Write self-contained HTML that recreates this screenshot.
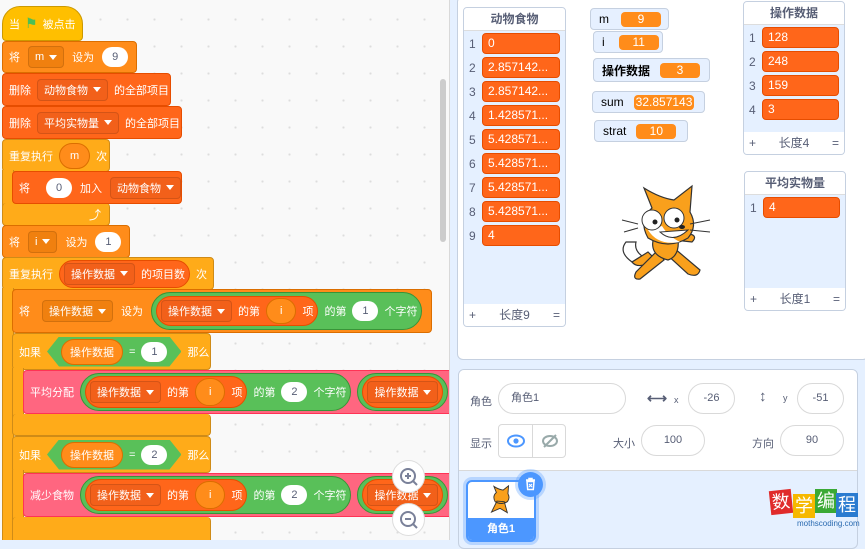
<!DOCTYPE html>
<html><head><meta charset="utf-8"><style>
*{box-sizing:border-box;margin:0;padding:0}
body{width:865px;height:540px;overflow:hidden;position:relative;background:#e5f0ff;font-family:"Liberation Sans","Noto Sans CJK SC",sans-serif;font-size:12px}
#code{position:absolute;left:0;top:0;width:450px;height:540px;background-color:#f9f9f9;background-image:radial-gradient(#ddd 1px,transparent 1.2px);background-size:27px 27px;background-position:6px 6px;border-right:1px solid #d9d9d9;overflow:hidden}
.b{position:absolute;color:#fff;display:flex;align-items:center;white-space:nowrap;padding-left:6px;border-radius:4px;font-size:11px;gap:6px}
.b>*{flex:none}
.ev{background:#ffbf00;border:1px solid #cc9900}
.va{background:#ff8c1a;border:1px solid #db6e00}
.li{background:#ff661a;border:1px solid #e64d00}
.co{background:#ffab19;border:1px solid #cf8b17}
.cu{background:#ff6680;border:1px solid #ff3355}
.dd{height:22px;border-radius:4px;padding:0 6px;display:flex;align-items:center;border:1px solid rgba(0,0,0,.12)}
.dd::after{content:"";border:4px solid transparent;border-top:5px solid #fff;border-bottom:0;margin-left:5px}
.ddl{background:#f2601a}.ddv{background:#f0800f}
.ov{height:20px;border-radius:10px;background:#fff;color:#575e75;padding:0 8px;display:flex;align-items:center;justify-content:center;min-width:26px}
.rp{border-radius:15px;display:flex;align-items:center;padding:0 4px;height:28px;gap:6px}
.rp>*{flex:none}
.gr{background:#59c059;border:1px solid #389438}
.orr{background:#ff661a;border:1px solid #e64d00;height:24px;border-radius:12px;padding:0 4px}
.vr{background:#ff8c1a;border:1px solid #db6e00;border-radius:12px;height:22px;padding:0 8px;display:flex;align-items:center}
.mon{position:absolute;background:#e6f0ff;border:1px solid #c5d0e0;border-radius:4px;display:flex;align-items:center;padding-left:8px;font-size:12px;color:#000}
.mv{background:#ff8c1a;color:#fff;border-radius:4px;height:15px;padding:0 6px;margin-left:10px;text-align:center;line-height:15px}
.list{position:absolute;background:#e5f0ff;border:1px solid #c5d0e0;border-radius:4px;overflow:hidden}
.lh{background:#fff;height:23px;text-align:center;line-height:23px;color:#575e75;font-weight:bold;border-bottom:1px solid #ddd}
.lf{position:absolute;bottom:0;left:0;right:0;height:22px;background:#fff;color:#575e75;font-size:12px;line-height:22px;text-align:center}
.lf .p{position:absolute;left:5px}.lf .e{position:absolute;right:5px}
.it{position:absolute;left:0;height:24px;width:100%}
.it .n{position:absolute;left:5px;top:4px;color:#575e75}
.it .v{position:absolute;left:18px;top:0;right:5px;height:21px;background:#ff661a;border:1px solid #e64d00;border-radius:4px;color:#fff;padding-left:5px;line-height:19px}
.inp{position:absolute;height:31px;border:1px solid #d9d9d9;border-radius:16px;background:#fff;color:#575e75;font-size:11px;line-height:29px;text-align:center}
.lab{position:absolute;color:#575e75;font-size:11px}
.hex{height:30px;border-radius:0;clip-path:polygon(12px 0,calc(100% - 12px) 0,100% 50%,calc(100% - 12px) 100%,12px 100%,0 50%);padding:0 14px;background:#59c059;display:flex;align-items:center;gap:6px}
</style></head><body>
<div id="code">
 <div class="b ev" style="left:2px;top:6px;width:81px;height:35px;border-radius:18px 18px 4px 4px;gap:5px">当<span style="color:#4cbf56;font-size:14px">⚑</span>被点击</div>
 <div class="b va" style="left:2px;top:41px;width:135px;height:32px;gap:8px">将<span class="dd ddv">m</span>设为<span class="ov">9</span></div>
 <div class="b li" style="left:2px;top:73px;width:169px;height:33px">删除<span class="dd ddl">动物食物</span>的全部项目</div>
 <div class="b li" style="left:2px;top:106px;width:180px;height:33px">删除<span class="dd ddl">平均实物量</span>的全部项目</div>
 <div class="b co" style="left:2px;top:139px;width:108px;height:33px">重复执行<span class="vr" style="height:26px;border-radius:13px;padding:0 10px">m</span>次</div>
 <div class="b co" style="left:2px;top:170px;width:12px;height:40px;border-radius:0;border-top:0;border-bottom:0"></div>
 <div class="b co" style="left:2px;top:203px;width:108px;height:23px;border-top:0;justify-content:flex-end;padding-right:8px;font-size:12px">⤴</div>
 <div class="b li" style="left:12px;top:171px;width:170px;height:33px;gap:8px">将<span class="ov" style="margin-left:8px">0</span>加入<span class="dd ddl">动物食物</span></div>
 <div class="b va" style="left:2px;top:225px;width:128px;height:33px;gap:8px">将<span class="dd ddv">i</span>设为<span class="ov">1</span></div>
 <div class="b co" style="left:2px;top:257px;width:212px;height:33px">重复执行<span class="rp orr" style="height:28px;border-radius:14px"><span class="dd ddl">操作数据</span>的项目数</span>次</div>
 <div class="b co" style="left:2px;top:288px;width:12px;height:260px;border-radius:0;border-top:0;border-bottom:0"></div>
 <div class="b va" style="left:12px;top:289px;width:420px;height:44px;gap:8px">将<span class="dd ddv" style="margin-left:4px">操作数据</span>设为<span class="rp gr" style="height:38px;border-radius:19px"><span class="rp orr" style="height:30px;border-radius:15px"><span class="dd ddl">操作数据</span>的第<span class="vr" style="height:26px;border-radius:13px;padding:0 13px">i</span>项</span>的第<span class="ov">1</span>个字符</span></div>
 <div class="b co" style="left:12px;top:333px;width:199px;height:37px">如果<span class="hex"><span class="vr" style="height:26px;border-radius:13px">操作数据</span>=<span class="ov">1</span></span>那么</div>
 <div class="b co" style="left:12px;top:368px;width:12px;height:50px;border-radius:0;border-top:0;border-bottom:0"></div>
 <div class="b co" style="left:12px;top:414px;width:199px;height:22px;border-top:0"></div>
 <div class="b cu" style="left:23px;top:370px;width:440px;height:44px">平均分配<span class="rp gr" style="height:38px;border-radius:19px"><span class="rp orr" style="height:32px;border-radius:16px"><span class="dd ddl">操作数据</span>的第<span class="vr" style="height:28px;border-radius:14px;padding:0 13px">i</span>项</span>的第<span class="ov">2</span>个字符</span><span class="rp gr" style="height:38px;border-radius:19px"><span class="rp orr" style="height:32px;border-radius:16px"><span class="dd ddl">操作数据</span></span></span></div>
 <div class="b co" style="left:12px;top:436px;width:199px;height:37px">如果<span class="hex"><span class="vr" style="height:26px;border-radius:13px">操作数据</span>=<span class="ov">2</span></span>那么</div>
 <div class="b co" style="left:12px;top:470px;width:12px;height:50px;border-radius:0;border-top:0;border-bottom:0"></div>
 <div class="b co" style="left:12px;top:517px;width:199px;height:30px;border-top:0"></div>
 <div class="b cu" style="left:23px;top:473px;width:440px;height:44px">减少食物<span class="rp gr" style="height:38px;border-radius:19px"><span class="rp orr" style="height:32px;border-radius:16px"><span class="dd ddl">操作数据</span>的第<span class="vr" style="height:28px;border-radius:14px;padding:0 13px">i</span>项</span>的第<span class="ov">2</span>个字符</span><span class="rp gr" style="height:38px;border-radius:19px"><span class="rp orr" style="height:32px;border-radius:16px"><span class="dd ddl">操作数据</span></span></span></div>
 <div style="position:absolute;left:440px;top:79px;width:6px;height:163px;background:#ccc;border-radius:3px"></div>
 <div style="position:absolute;left:392px;top:460px;width:33px;height:33px;border-radius:50%;background:#fff;border:1px solid #ddd"><svg width="33" height="33"><circle cx="15" cy="15" r="7" fill="none" stroke="#7a8199" stroke-width="2"/><path d="M12 15h6M15 12v6M20 20l4 4" stroke="#7a8199" stroke-width="2"/></svg></div>
 <div style="position:absolute;left:392px;top:503px;width:33px;height:33px;border-radius:50%;background:#fff;border:1px solid #ddd"><svg width="33" height="33"><circle cx="15" cy="15" r="7" fill="none" stroke="#7a8199" stroke-width="2"/><path d="M12 15h6M20 20l4 4" stroke="#7a8199" stroke-width="2"/></svg></div>
</div>

<div style="position:absolute;left:457px;top:-4px;width:412px;height:364px;background:#fff;border:1px solid #c5d0e0;border-radius:6px"></div>
<div class="list" style="left:463px;top:7px;width:103px;height:320px">
 <div class="lh">动物食物</div>
 <div class="it" style="top:25px"><span class="n">1</span><span class="v">0</span></div>
 <div class="it" style="top:49px"><span class="n">2</span><span class="v">2.857142...</span></div>
 <div class="it" style="top:73px"><span class="n">3</span><span class="v">2.857142...</span></div>
 <div class="it" style="top:97px"><span class="n">4</span><span class="v">1.428571...</span></div>
 <div class="it" style="top:121px"><span class="n">5</span><span class="v">5.428571...</span></div>
 <div class="it" style="top:145px"><span class="n">6</span><span class="v">5.428571...</span></div>
 <div class="it" style="top:169px"><span class="n">7</span><span class="v">5.428571...</span></div>
 <div class="it" style="top:193px"><span class="n">8</span><span class="v">5.428571...</span></div>
 <div class="it" style="top:217px"><span class="n">9</span><span class="v">4</span></div>
 <div class="lf"><span class="p">+</span>长度9<span class="e">=</span></div>
</div>
<div class="mon" style="left:590px;top:8px;width:79px;height:22px">m<span class="mv" style="width:40px;margin-left:12px">9</span></div>
<div class="mon" style="left:593px;top:31px;width:70px;height:22px">i<span class="mv" style="width:40px;margin-left:14px">11</span></div>
<div class="mon" style="left:593px;top:58px;width:117px;height:24px;font-weight:bold">操作数据<span class="mv" style="width:40px;font-weight:normal">3</span></div>
<div class="mon" style="left:592px;top:91px;width:113px;height:22px">sum<span class="mv" style="margin-left:10px;padding:0 2px">32.857143</span></div>
<div class="mon" style="left:594px;top:120px;width:94px;height:22px">strat<span class="mv" style="width:40px">10</span></div>
<div class="list" style="left:743px;top:1px;width:102px;height:154px">
 <div class="lh">操作数据</div>
 <div class="it" style="top:25px"><span class="n">1</span><span class="v">128</span></div>
 <div class="it" style="top:49px"><span class="n">2</span><span class="v">248</span></div>
 <div class="it" style="top:73px"><span class="n">3</span><span class="v">159</span></div>
 <div class="it" style="top:97px"><span class="n">4</span><span class="v">3</span></div>
 <div class="lf"><span class="p">+</span>长度4<span class="e">=</span></div>
</div>
<div class="list" style="left:744px;top:171px;width:102px;height:140px">
 <div class="lh">平均实物量</div>
 <div class="it" style="top:25px"><span class="n">1</span><span class="v">4</span></div>
 <div class="lf"><span class="p">+</span>长度1<span class="e">=</span></div>
</div>
<svg style="position:absolute;left:618px;top:180px" width="105" height="105" viewBox="0 0 105 105">
 <g stroke="#333" stroke-width="1.2" fill="#f9a01c">
  <path d="M8 62 Q0 72 14 82 L24 76 Q16 70 18 62Z" fill="#fff"/>
  <path d="M14 82 Q20 90 38 80 L30 72Z"/>
  <path d="M40 70 L18 92 Q14 100 22 99 L46 80Z"/>
  <path d="M46 72 L70 94 Q80 98 82 90 L56 68Z"/>
  <path d="M36 56 Q30 75 50 80 Q62 76 60 58Z"/>
  <path d="M56 60 L74 62 Q80 56 72 54 L58 54Z"/>
  <path d="M26 8 L34 28 Q20 40 30 58 Q50 70 70 58 Q80 46 72 32 L74 6 L56 20 Q42 18 26 8Z"/>
 </g>
 <path d="M30 50 Q40 66 62 62 Q50 56 44 46Z" fill="#fff"/>
 <ellipse cx="34" cy="40" rx="10" ry="10" fill="#fff" stroke="#333"/>
 <ellipse cx="56" cy="38" rx="10" ry="10" fill="#fff" stroke="#333"/>
 <circle cx="37" cy="42" r="2.5" fill="#222"/><circle cx="59" cy="40" r="2.5" fill="#222"/>
 <path d="M42 52 Q55 64 70 50 Z" fill="#fff" stroke="#333"/>
 <ellipse cx="64" cy="47" rx="3" ry="2" fill="#222"/>
 <path d="M72 44 L92 40 M72 50 L92 52 M20 44 L4 40 M20 48 L6 52" stroke="#333"/>
</svg>

<div style="position:absolute;left:458px;top:369px;width:400px;height:180px;background:#e5f0ff;border:1px solid #c5d0e0;border-radius:6px;overflow:hidden">
 <div style="position:absolute;left:0;top:0;width:100%;height:101px;background:#fff;border-bottom:1px solid #d9d9d9"></div>
</div>
<span class="lab" style="left:470px;top:393px">角色</span>
<div class="inp" style="left:498px;top:383px;width:128px;text-align:left;padding-left:12px">角色1</div>
<span class="lab" style="left:647px;top:390px;font-size:14px;font-weight:bold">⟷</span>
<span class="lab" style="left:674px;top:395px;font-size:9px">x</span>
<div class="inp" style="left:688px;top:383px;width:47px">-26</div>
<span class="lab" style="left:759px;top:388px;font-size:15px;font-weight:bold">↕</span>
<span class="lab" style="left:783px;top:393px;font-size:9px">y</span>
<div class="inp" style="left:797px;top:383px;width:47px">-51</div>
<span class="lab" style="left:470px;top:435px">显示</span>
<div style="position:absolute;left:498px;top:424px;width:68px;height:34px;border:1px solid #d9d9d9;border-radius:4px;background:#fff">
 <div style="position:absolute;left:33px;top:0;width:1px;height:32px;background:#d9d9d9"></div>
 <svg style="position:absolute;left:7px;top:7px" width="20" height="18"><ellipse cx="10" cy="9" rx="8" ry="5.5" fill="none" stroke="#4c97ff" stroke-width="2"/><circle cx="10" cy="9" r="2.6" fill="#4c97ff"/></svg>
 <svg style="position:absolute;left:41px;top:7px" width="20" height="18"><ellipse cx="10" cy="9" rx="7" ry="5" fill="none" stroke="#9aa" stroke-width="2"/><path d="M4 15 L16 3" stroke="#9aa" stroke-width="2"/></svg>
</div>
<span class="lab" style="left:613px;top:435px">大小</span>
<div class="inp" style="left:641px;top:425px;width:64px">100</div>
<span class="lab" style="left:752px;top:435px">方向</span>
<div class="inp" style="left:780px;top:425px;width:64px">90</div>
<div style="position:absolute;left:466px;top:480px;width:70px;height:62px;border:2px solid #4c97ff;border-radius:6px;background:#fff;overflow:hidden;box-shadow:0 0 0 3px rgba(76,151,255,.3)">
 <svg style="position:absolute;left:18px;top:2px" width="32" height="32" viewBox="0 0 105 105"><path d="M26 8 L34 28 Q20 40 30 58 Q50 70 70 58 Q80 46 72 32 L74 6 L56 20 Q42 18 26 8Z M36 56 L18 92 L46 80 L70 94 L60 58Z" fill="#f9a01c" stroke="#333" stroke-width="3"/></svg>
 <div style="position:absolute;left:0;bottom:0;width:100%;height:22px;background:#4c97ff;color:#fff;font-weight:bold;font-size:11px;text-align:center;line-height:22px">角色1</div>
</div>
<div style="position:absolute;left:518px;top:472px;width:25px;height:25px;border-radius:50%;background:#4c97ff;box-shadow:0 0 0 3px rgba(76,151,255,.3)">
 <svg width="25" height="25"><path d="M8 8h9M11 8V6.5h3V8M9 9.5h7l-.7 8h-5.6z" fill="none" stroke="#fff" stroke-width="1.5"/><path d="M11 12l3 3M14 12l-3 3" stroke="#fff" stroke-width="1.2"/></svg>
</div>
<div style="position:absolute;left:770px;top:490px;width:90px;height:40px">
 <span style="position:absolute;left:0;top:0;width:22px;height:24px;background:#e02b2b;color:#fff;font-size:18px;line-height:24px;text-align:center;transform:rotate(-6deg)">数</span>
 <span style="position:absolute;left:23px;top:4px;width:22px;height:24px;background:#f6b800;color:#fff;font-size:18px;line-height:24px;text-align:center">学</span>
 <span style="position:absolute;left:45px;top:-1px;width:22px;height:24px;background:#3aa935;color:#fff;font-size:18px;line-height:24px;text-align:center">编</span>
 <span style="position:absolute;left:66px;top:3px;width:22px;height:24px;background:#2a7bd0;color:#fff;font-size:18px;line-height:24px;text-align:center">程</span>
 <span style="position:absolute;left:27px;top:29px;font-size:8px;color:#2a6ab0">mothscoding.com</span>
</div>
</body></html>
